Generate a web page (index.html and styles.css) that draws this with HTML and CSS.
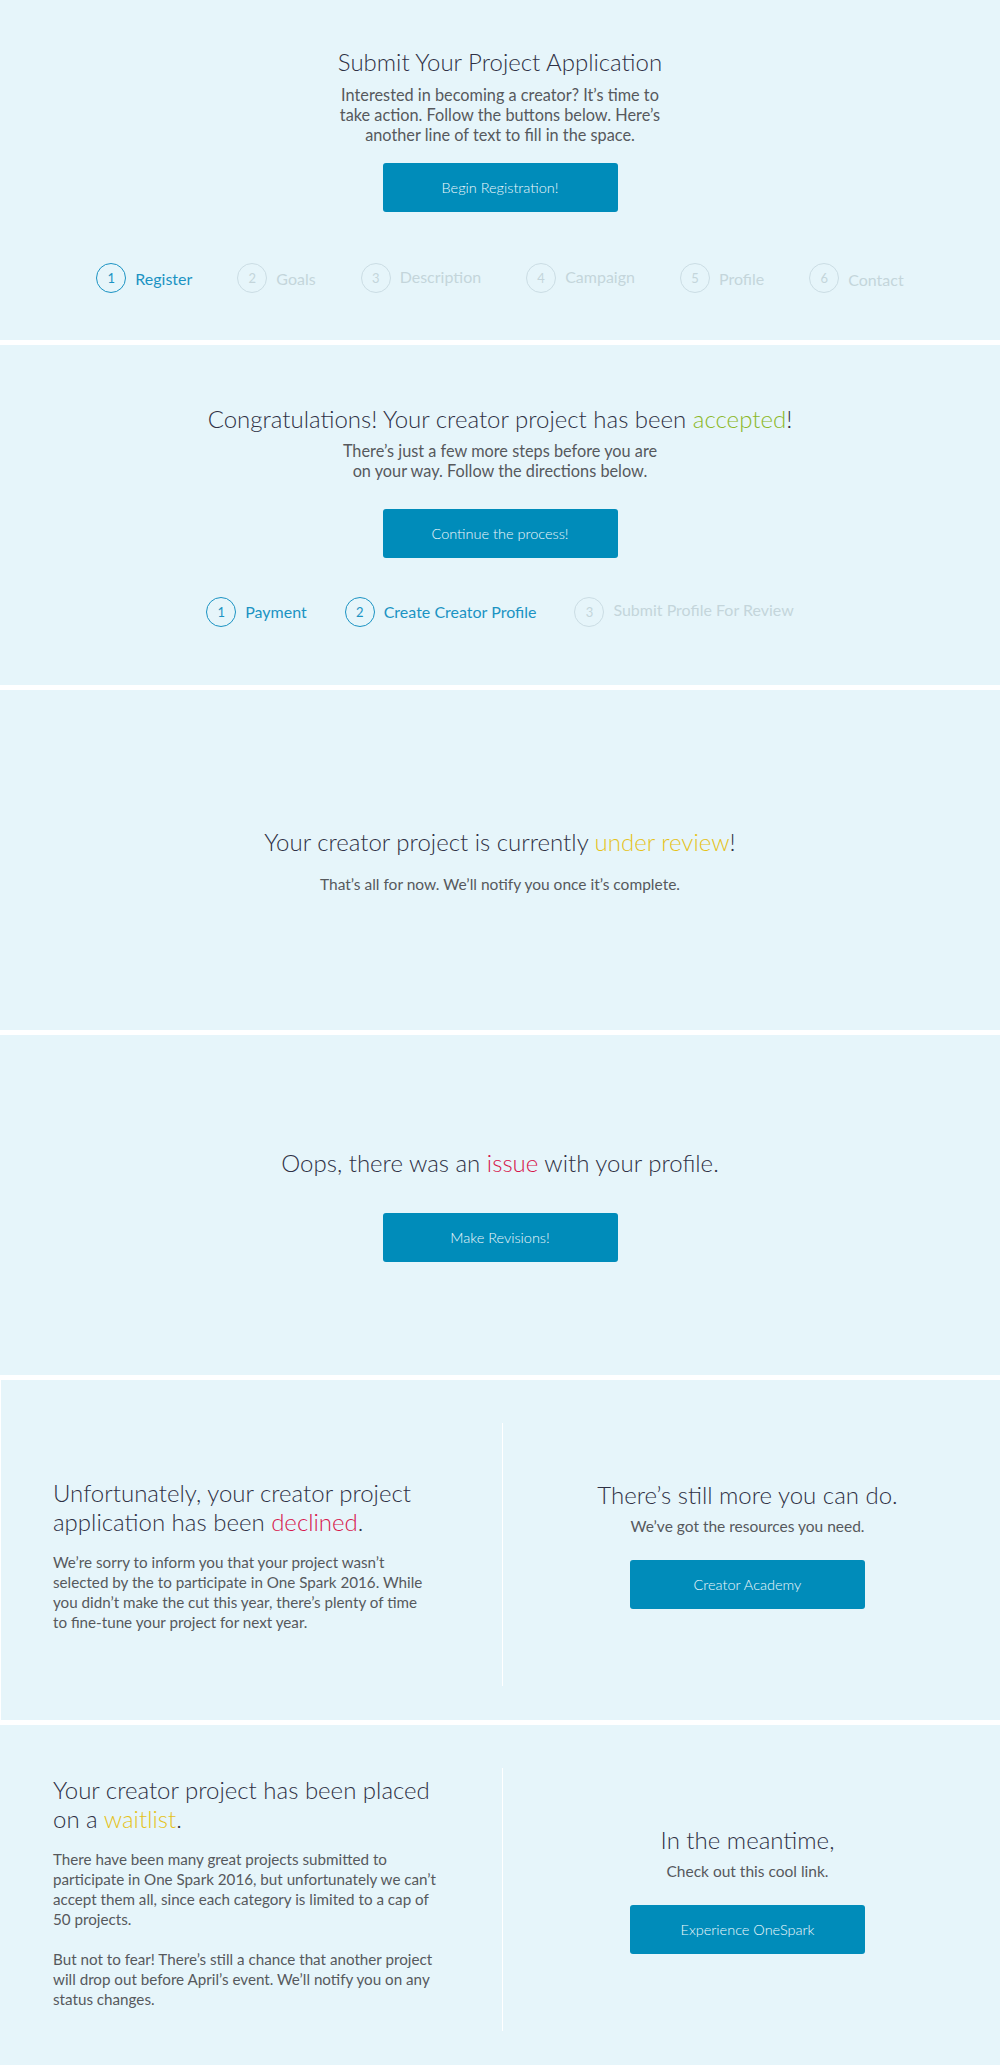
FILE: index.html
```html
<!DOCTYPE html>
<html lang="en">
<head>
<meta charset="utf-8">
<title>Creator Project Status</title>
<link rel="stylesheet" href="styles.css">
</head>
<body>
<main class="page">
  <section class="panel panel--apply">
    <h1 class="title">Submit Your Project Application</h1>
    <p class="lead">Interested in becoming a creator? It’s time to<br>take action. Follow the buttons below. Here’s<br>another line of text to fill in the space.</p>
    <a class="btn" href="#">Begin Registration!</a>
    <ol class="steps steps--six">
      <li class="step is-active"><span class="step-num">1</span><span class="step-label">Register</span></li>
      <li class="step"><span class="step-num">2</span><span class="step-label">Goals</span></li>
      <li class="step step--up"><span class="step-num">3</span><span class="step-label">Description</span></li>
      <li class="step step--up"><span class="step-num">4</span><span class="step-label">Campaign</span></li>
      <li class="step"><span class="step-num">5</span><span class="step-label">Profile</span></li>
      <li class="step step--down"><span class="step-num">6</span><span class="step-label">Contact</span></li>
    </ol>
  </section>

  <section class="panel panel--accepted">
    <h1 class="title">Congratulations! Your creator project has been <span class="hl hl--green">accepted</span>!</h1>
    <p class="lead">There’s just a few more steps before you are<br>on your way. Follow the directions below.</p>
    <a class="btn" href="#">Continue the process!</a>
    <ol class="steps steps--three">
      <li class="step is-active"><span class="step-num">1</span><span class="step-label">Payment</span></li>
      <li class="step is-active"><span class="step-num">2</span><span class="step-label">Create Creator Profile</span></li>
      <li class="step step--up"><span class="step-num">3</span><span class="step-label">Submit Profile For Review</span></li>
    </ol>
  </section>

  <section class="panel panel--review">
    <h1 class="title">Your creator project is currently <span class="hl hl--yellow">under review</span>!</h1>
    <p class="lead">That’s all for now. We’ll notify you once it’s complete.</p>
  </section>

  <section class="panel panel--issue">
    <h1 class="title">Oops, there was an <span class="hl hl--red">issue</span> with your profile.</h1>
    <a class="btn" href="#">Make Revisions!</a>
  </section>

  <section class="panel panel--split panel--declined">
    <div class="col col--left">
      <h2 class="split-title">Unfortunately, your creator project<br>application has been <span class="hl hl--red">declined</span>.</h2>
      <p class="split-text">We’re sorry to inform you that your project wasn’t<br>selected by the to participate in One Spark 2016. While<br>you didn’t make the cut this year, there’s plenty of time<br>to fine-tune your project for next year.</p>
    </div>
    <div class="col col--right">
      <h2 class="split-title">There’s still more you can do.</h2>
      <p class="lead">We’ve got the resources you need.</p>
      <a class="btn" href="#">Creator Academy</a>
    </div>
  </section>

  <section class="panel panel--split panel--waitlist">
    <div class="col col--left">
      <h2 class="split-title">Your creator project has been placed<br>on a <span class="hl hl--yellow">waitlist</span>.</h2>
      <p class="split-text">There have been many great projects submitted to<br>participate in One Spark 2016, but unfortunately we can’t<br>accept them all, since each category is limited to a cap of<br>50 projects.</p>
      <p class="split-text split-text--last">But not to fear! There’s still a chance that another project<br>will drop out before April’s event. We’ll notify you on any<br>status changes.</p>
    </div>
    <div class="col col--right">
      <h2 class="split-title">In the meantime,</h2>
      <p class="lead">Check out this cool link.</p>
      <a class="btn" href="#">Experience OneSpark</a>
    </div>
  </section>
</main>
</body>
</html>
```

FILE: styles.css
```css
body {
  margin: 0;
  background: #ffffff;
  font-family: Lato, "Open Sans", "Liberation Sans", sans-serif;
  color: #34364a;
}

.page {
  display: flex;
  flex-direction: column;
  gap: 5px;
}

.panel {
  background: #e6f5fa;
  height: 340px;
  box-sizing: border-box;
  display: flex;
  flex-direction: column;
  align-items: center;
  justify-content: center;
  text-align: center;
}

.title {
  margin: 0;
  font-size: 24px;
  line-height: 30px;
  font-weight: 300;
  color: #2f3145;
}

.lead {
  margin: 8px 0 0;
  font-size: 15.5px;
  line-height: 20px;
  color: #56595d;
}
.panel--apply .lead,
.panel--accepted .lead { font-size: 16.3px; }

.btn {
  display: flex;
  align-items: center;
  justify-content: center;
  width: 235px;
  height: 49px;
  margin-top: 18px;
  border-radius: 3px;
  background: #008cba;
  color: #eef8fc;
  font-size: 14.5px;
  font-weight: 300;
  text-decoration: none;
}

.hl--green { color: #8cb828; }
.hl--yellow { color: #e5c21a; }
.hl--red { color: #d6174c; }

/* steps */
.steps {
  list-style: none;
  display: flex;
  align-items: center;
  margin: 51px 0 0;
  padding: 0;
}
.steps--six { gap: 45px; }
.steps--three { gap: 38px; }

.step {
  display: flex;
  align-items: center;
  gap: 9px;
  font-size: 16px;
  color: #c4d5db;
}
.step-num {
  width: 30px;
  height: 30px;
  box-sizing: border-box;
  border: 1px solid #cbdde4;
  border-radius: 50%;
  display: flex;
  align-items: center;
  justify-content: center;
  font-size: 13px;
}
.step--up .step-label { margin-bottom: 4px; }
.step--down .step-label { margin-top: 2px; }
.step.is-active { color: #1b93c3; }
.step.is-active .step-num { border-color: #1b93c3; }

/* per-panel spacing */
.panel--accepted .lead { margin-top: 7px; }
.panel--accepted .btn { margin-top: 28px; }
.panel--accepted .steps { margin-top: 39px; }
.panel--review .lead { margin-top: 17px; }
.panel--issue .btn { margin-top: 35px; }

/* split panels */
.panel--split {
  flex-direction: row;
  align-items: stretch;
  justify-content: flex-start;
  padding: 43px 0 34px;
  text-align: left;
}
.panel--declined { border-left: 1px solid #ffffff; }

.col {
  display: flex;
  flex-direction: column;
  justify-content: center;
}
.col--left {
  flex: 0 0 502px;
  box-sizing: border-box;
  padding-left: 53px;
}
.panel--declined .col--left { flex-basis: 501px; padding-left: 52px; }
.col--right {
  flex: 1;
  border-left: 1px solid #ffffff;
  align-items: center;
  text-align: center;
  padding-right: 8px;
}

.split-title {
  margin: 0;
  font-size: 24px;
  line-height: 29px;
  font-weight: 300;
  color: #2f3145;
}
.split-text {
  margin: 16px 0 0;
  font-size: 15.2px;
  line-height: 20px;
  color: #56595d;
}
.split-text + .split-text { margin-top: 20px; }
.split-text--last { margin-bottom: 15px; }

.col--right .lead { margin-top: 7px; }
.col--right .btn { margin-top: 24px; margin-bottom: 21px; }
```
